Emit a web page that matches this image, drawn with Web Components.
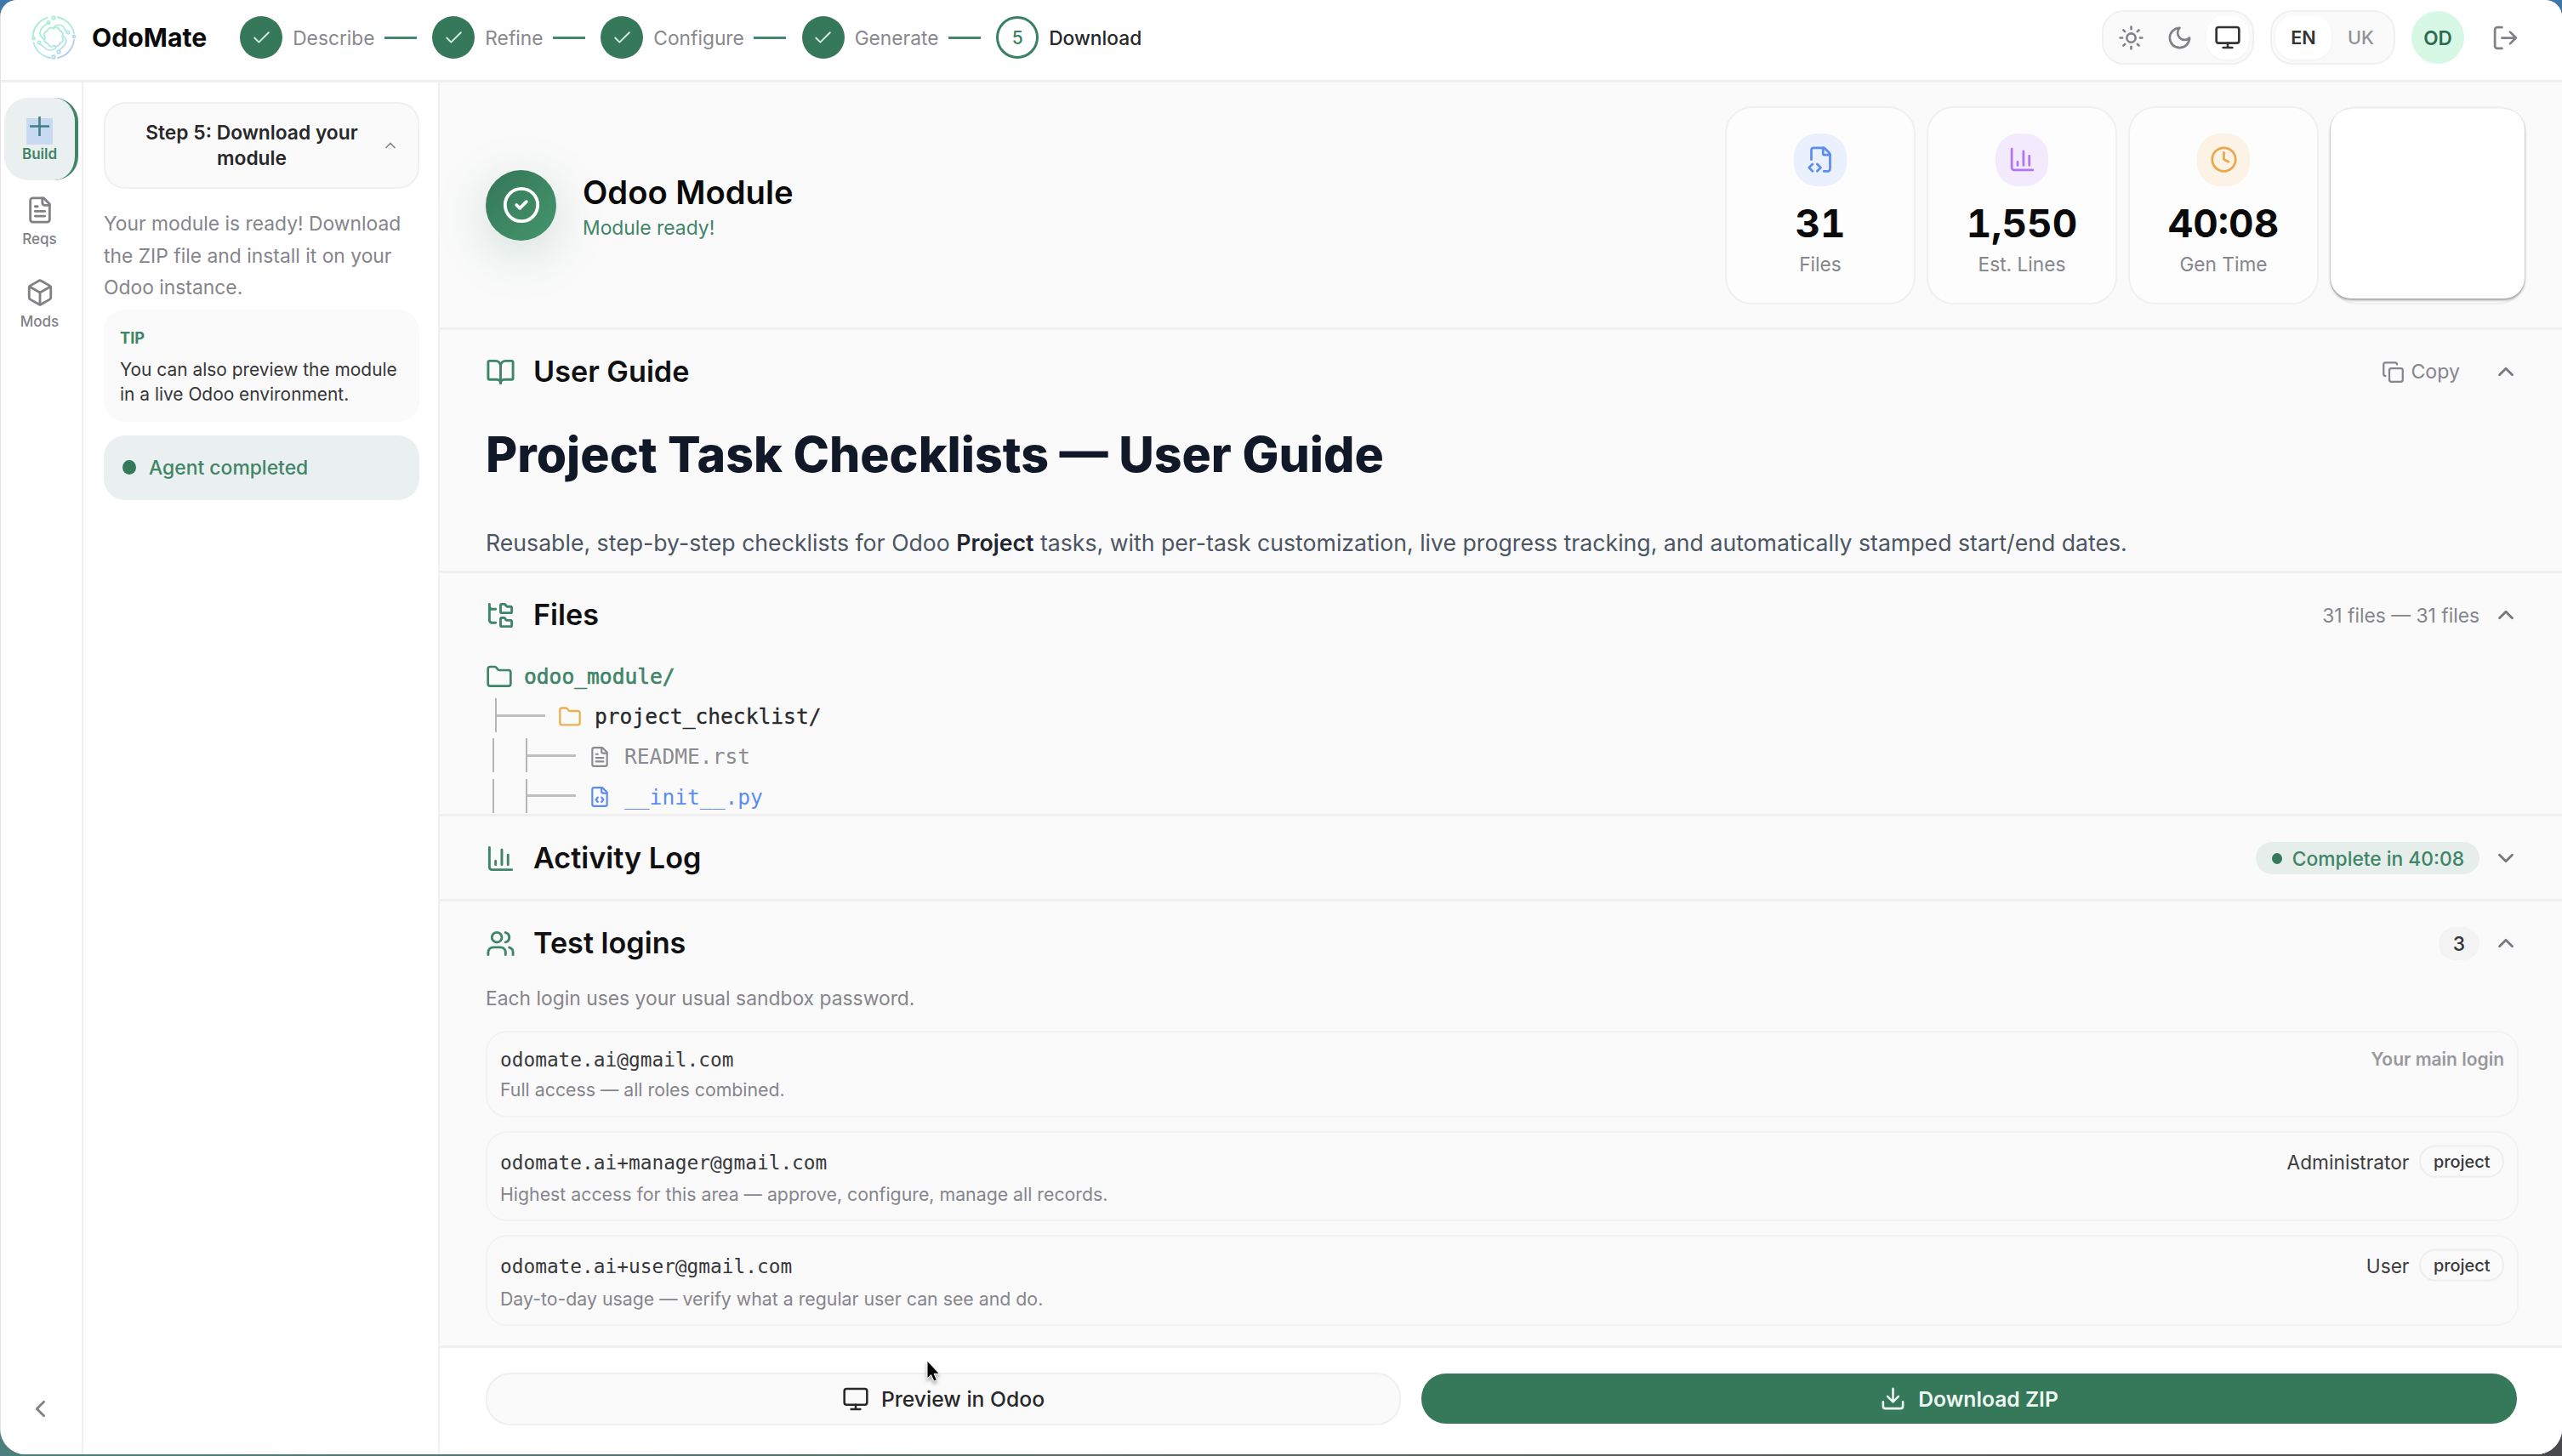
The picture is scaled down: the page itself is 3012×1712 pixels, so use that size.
<!DOCTYPE html>
<html lang="en">
<head>
<meta charset="utf-8">
<title>OdoMate</title>
<style>
html, body { margin: 0; height: 100%; }
body {
  background: linear-gradient(#3f76ac 0 50%, transparent 50%), linear-gradient(90deg, #4d7f7d, #5a6462 50%, #4a4a4c);
  font-family: Inter, "Liberation Sans", sans-serif;
  color: #0a0a0b;
  overflow: hidden;
}
</style>
</head>
<body>
<odo-app></odo-app>
<script>
const ICONS = {
  check: '<path d="M20 6 9 17l-5-5"/>',
  sun: '<circle cx="12" cy="12" r="4"/><path d="M12 2v2M12 20v2M4.93 4.93l1.41 1.41M17.66 17.66l1.41 1.41M2 12h2M20 12h2M6.34 17.66l-1.41 1.41M19.07 4.93l-1.41 1.41"/>',
  moon: '<path d="M12 3a6 6 0 0 0 9 9 9 9 0 1 1-9-9Z"/>',
  monitor: '<rect width="20" height="14" x="2" y="3" rx="2"/><path d="M8 21h8M12 17v4"/>',
  logout: '<path d="M9 21H5a2 2 0 0 1-2-2V5a2 2 0 0 1 2-2h4M16 17l5-5-5-5M21 12H9"/>',
  file: '<path d="M15 2H6a2 2 0 0 0-2 2v16a2 2 0 0 0 2 2h12a2 2 0 0 0 2-2V7Z"/><path d="M14 2v4a2 2 0 0 0 2 2h4M10 9H8M16 13H8M16 17H8"/>',
  filecode: '<path d="M15 2H6a2 2 0 0 0-2 2v16a2 2 0 0 0 2 2h12a2 2 0 0 0 2-2V7Z"/><path d="M14 2v4a2 2 0 0 0 2 2h4M10 12.5 8 15l2 2.5M14 12.5l2 2.5-2 2.5"/>',
  filecorner: '<path d="M4 12.15V4a2 2 0 0 1 2-2h8a2.4 2.4 0 0 1 1.706.706l3.588 3.588A2.4 2.4 0 0 1 20 8v12a2 2 0 0 1-2 2h-3.35"/><path d="M14 2v5a1 1 0 0 0 1 1h5M5 16l-3 3 3 3M9 22l3-3-3-3"/>',
  box: '<path d="M21 8a2 2 0 0 0-1-1.73l-7-4a2 2 0 0 0-2 0l-7 4A2 2 0 0 0 3 8v8a2 2 0 0 0 1 1.73l7 4a2 2 0 0 0 2 0l7-4A2 2 0 0 0 21 16Z"/><path d="m3.3 7 8.7 5 8.7-5M12 22V12"/>',
  book: '<path d="M12 7v14"/><path d="M3 18a1 1 0 0 1-1-1V4a1 1 0 0 1 1-1h5a4 4 0 0 1 4 4 4 4 0 0 1 4-4h5a1 1 0 0 1 1 1v13a1 1 0 0 1-1 1h-6a3 3 0 0 0-3 3 3 3 0 0 0-3-3z"/>',
  tree: '<path d="M20 10a1 1 0 0 0 1-1V6a1 1 0 0 0-1-1h-2.5a1 1 0 0 1-.8-.4l-.9-1.2A1 1 0 0 0 15 3h-2a1 1 0 0 0-1 1v5a1 1 0 0 0 1 1Z"/><path d="M20 21a1 1 0 0 0 1-1v-3a1 1 0 0 0-1-1h-2.9a1 1 0 0 1-.88-.55l-.42-.85a1 1 0 0 0-.92-.6H13a1 1 0 0 0-1 1v5a1 1 0 0 0 1 1Z"/><path d="M3 5a2 2 0 0 0 2 2h3M3 3v13a2 2 0 0 0 2 2h3"/>',
  chart: '<path d="M3 3v16a2 2 0 0 0 2 2h16M18 17V9M13 17V5M8 17v-3"/>',
  users: '<path d="M16 21v-2a4 4 0 0 0-4-4H6a4 4 0 0 0-4 4v2"/><circle cx="9" cy="7" r="4"/><path d="M22 21v-2a4 4 0 0 0-3-3.87M16 3.13a4 4 0 0 1 0 7.75"/>',
  folder: '<path d="M20 20a2 2 0 0 0 2-2V8a2 2 0 0 0-2-2h-7.9a2 2 0 0 1-1.69-.9L9.6 3.9A2 2 0 0 0 7.93 3H4a2 2 0 0 0-2 2v13a2 2 0 0 0 2 2Z"/>',
  clock: '<circle cx="12" cy="12" r="10"/><path d="M12 6v6l4 2"/>',
  copy: '<rect width="14" height="14" x="8" y="8" rx="2"/><path d="M4 16c-1.1 0-2-.9-2-2V4c0-1.1.9-2 2-2h10c1.1 0 2 .9 2 2"/>',
  download: '<path d="M21 15v4a2 2 0 0 1-2 2H5a2 2 0 0 1-2-2v-4M7 10l5 5 5-5M12 15V3"/>',
  done: '<circle cx="12" cy="12" r="10"/><path d="m9 12 2 2 4-4"/>',
  up: '<path d="m18 15-6-6-6 6"/>',
  down: '<path d="m6 9 6 6 6-6"/>',
  left: '<path d="m15 18-6-6 6-6"/>'
};

function define(name, css, html) {
  customElements.define(name, class extends HTMLElement {
    connectedCallback() {
      if (this.shadowRoot) return;
      const body = typeof html === 'function' ? html(this) : html;
      this.attachShadow({ mode: 'open' }).innerHTML =
        `<style>*{box-sizing:border-box}:host{box-sizing:border-box}${css}</style>${body}`;
    }
  });
}

define('odo-icon', ':host{display:block;flex:none}svg{display:block}',
  el => `<svg width="${el.getAttribute('size')}" height="${el.getAttribute('size')}" viewBox="0 0 24 24" fill="none" stroke="currentColor" stroke-width="${el.getAttribute('stroke') || 2}" stroke-linecap="round" stroke-linejoin="round">${ICONS[el.getAttribute('name')]}</svg>`);

define('odo-logo', ':host{display:block;flex:none;width:52px;height:52px}svg{display:block}', `
<svg width="52" height="52" viewBox="0 0 52 52" fill="none" stroke="url(#g)" stroke-linecap="round">
<defs><linearGradient id="g" x1="6" y1="4" x2="46" y2="50" gradientUnits="userSpaceOnUse"><stop offset="0" stop-color="#a6ecd2"/><stop offset=".6" stop-color="#b2ebe0"/><stop offset="1" stop-color="#a9bff6"/></linearGradient></defs>
<path stroke-width="1.9" d="M18.500 2.900A24.300 24.300 0 0 0 1.700 24M2.500 32A24.300 24.300 0 0 0 22 50M31 50A24.300 24.300 0 0 0 50 29M50 21A24.300 24.300 0 0 0 31 2.200"/>
<path stroke-width="1.7" d="M26 15c2-4 7-5 11-2 2 2 2 4 4 6M37 24c4 2 5 7 2 11-2 2-4 4-6 6M29 37c-2 4-7 5-11 3-3-2-4-4-8-6M15 28c-4-2-6-6-4-11 2-4 5-5 8-8"/>
<path stroke-width="1.9" d="M26 15.500c3-2.500 6.500-1 7 2.500 3.500.5 5 4 3 7 2.500 3 1 6.500-2.500 7.500-.5 3.500-4 5-7 3-3 2.500-6.500 1-7.500-2.500-3.500-.5-5-4-3-7-2.500-3-1-6.500 2.500-7.500.5-3.500 4.500-5 7.500-3z"/>
<g stroke-width="1.800"><circle cx="20" cy="8.500" r="1.700"/><circle cx="43" cy="20" r="1.700"/><circle cx="32" cy="43" r="1.800"/><circle cx="26" cy="49" r="1.800"/><circle cx="9" cy="32" r="1.700"/><circle cx="2.500" cy="27" r="1.500"/><circle cx="50" cy="25" r="1.500"/><circle cx="26" cy="3" r="1.800"/></g>
</svg>`);

/* ---------- header ---------- */
define('odo-step', `
:host{display:flex;align-items:center;font-size:22.75px;color:#88888e}
.dot{width:50px;height:50px;border-radius:50%;background:#35785a;color:#d9efe4;display:flex;align-items:center;justify-content:center;margin-right:12px}
:host([current]){color:#28282b;font-weight:500}
:host([current]) .dot{background:#fff;border:3px solid #3a8062;color:#3a8062;font-size:21px;font-weight:500}
.line{width:38px;height:3px;background:#45896d;margin:0 18.3px 0 11.5px}`,
  el => `<span class="dot">${el.hasAttribute('current') ? el.getAttribute('current') : '<odo-icon name="check" size="25" stroke="1.7"></odo-icon>'}</span><slot></slot>${el.hasAttribute('current') ? '' : '<span class="line"></span>'}`);

define('odo-header', `
:host{display:flex;align-items:center;height:97px;padding:0 50px 6px 36px;background:#fff;border-bottom:3px solid #efeff0}
.brand{font-size:30.2px;font-weight:700;margin:0 39px 0 19px}
.steps{display:flex;flex:1}
.group{display:flex;align-items:center;height:64px;padding:4px;border:2px solid #f0f0f1;border-radius:26px;background:#fafafa;color:#808086}
.group span{display:flex;align-items:center;justify-content:center;height:52px;border-radius:22px}
.theme span{width:57px}
.group .on{background:#fff;color:#333336;box-shadow:0 1px 3px rgba(0,0,0,.04)}
.theme .on{width:50px;margin-left:3px}
.lang{margin-left:19px;font-size:21.6px;font-weight:600}
.lang span{width:66px}
.lang .off{width:69px;color:#929298;font-weight:500}
.avatar{width:62px;height:62px;border-radius:50%;background:#d8f8e6;color:#2c6b50;font-weight:600;font-size:22.5px;display:flex;align-items:center;justify-content:center;margin:0 32px 0 19px;flex:none}
.out{color:#808086}`, `
<odo-logo></odo-logo><span class="brand">OdoMate</span>
<nav class="steps"><odo-step>Describe</odo-step><odo-step>Refine</odo-step><odo-step>Configure</odo-step><odo-step>Generate</odo-step><odo-step current="5">Download</odo-step></nav>
<div class="group theme"><span><odo-icon name="sun" size="31"></odo-icon></span><span><odo-icon name="moon" size="31"></odo-icon></span><span class="on"><odo-icon name="monitor" size="32"></odo-icon></span></div>
<div class="group lang"><span class="on">EN</span><span class="off">UK</span></div>
<span class="avatar">OD</span><odo-icon class="out" name="logout" size="33"></odo-icon>`);

/* ---------- left rail ---------- */
define('odo-rail-item', `
:host{display:flex;flex-direction:column;align-items:center;width:83px;height:97px;padding-top:16px;font-size:17px;font-weight:500;color:#808086;line-height:22px;border-radius:28px}
.pic{height:37px;display:flex;align-items:center;justify-content:center;margin-bottom:5px}
:host([active]){width:87px;background:#eaf0ef;border-right:4px solid #3f8567;color:#3f8567;font-weight:600;padding-top:24px}
.plus{width:31px;height:31px;background:#c8daf1;color:#3d7f86;display:grid;justify-items:center}
.plus svg{margin-top:-3px}
:host([active]) .pic{height:31px;margin-bottom:0}`,
  el => `<span class="pic">${el.hasAttribute('active') ? '<span class="plus"><svg width="25" height="25" viewBox="0 0 25 25" stroke="currentColor" stroke-width="2.6"><path d="M12.5 1v23M1 12.5h23"/></svg></span>' : `<odo-icon name="${el.getAttribute('icon')}" size="34" stroke="2"></odo-icon>`}</span><slot></slot>`);

define('odo-rail', `
:host{display:flex;flex-direction:column;align-items:flex-start;width:97px;background:#fff;border-right:2px solid #f0f0f1;padding:18px 0 0 4px}
.items{flex:1}
.collapse{color:#808086;margin:0 0 37px 26px}`, `
<div class="items"><odo-rail-item active>Build</odo-rail-item><odo-rail-item icon="file">Reqs</odo-rail-item><odo-rail-item icon="box">Mods</odo-rail-item></div>
<odo-icon class="collapse" name="left" size="33"></odo-icon>`);

/* ---------- side panel ---------- */
define('odo-guide', `
:host{display:flex;flex-direction:column;width:419px;padding:23px 22px 0 24px;background:#fff;border-right:2px solid #f0f0f1}
.step{display:flex;align-items:center;height:102px;border:2px solid #f0f0f1;border-radius:25px;background:#fafafa;padding-left:22px;font-size:22.8px;font-weight:600;line-height:30.5px;text-align:center;color:#28282b}
.step b{flex:1;font-weight:600;padding:0 3px 0 0}
.step odo-icon{color:#808086;margin-right:22px}
p{margin:23px 0 6px;font-size:22.85px;line-height:37.5px;color:#85858c;white-space:nowrap}
.tip{height:132px;border-radius:25px;background:#fafafa;padding:20px 19px;color:#363639;font-size:20.9px;line-height:29px;white-space:nowrap}
.tip b{display:block;font-size:18.2px;line-height:26px;color:#3f8567;margin-bottom:10px}
.agent{display:flex;align-items:center;gap:15px;height:76px;margin-top:16px;border-radius:25px;background:#eaf0ef;padding-left:22px;font-size:22.9px;font-weight:500;color:#3f8567}
.agent i{width:16px;height:17px;border-radius:50%;background:#35785a}`, `
<div class="step"><b>Step 5: Download your<br>module</b><odo-icon name="up" size="20"></odo-icon></div>
<p>Your module is ready! Download<br>the ZIP file and install it on your<br>Odoo instance.</p>
<div class="tip"><b>TIP</b>You can also preview the module<br>in a live Odoo environment.</div>
<div class="agent"><i></i>Agent completed</div>`);

/* ---------- hero ---------- */
define('odo-stat', `
:host{display:flex;flex-direction:column;align-items:center;width:224px;height:233px;border:2px solid #f0f0f1;border-radius:32px;background:#fdfdfd;padding-top:30px}
.tile{width:62px;height:62px;border-radius:27px;display:flex;align-items:center;justify-content:center;background:var(--tint);color:var(--ink)}
.num{font-size:45.7px;font-weight:700;line-height:56px;margin-top:16px;font-variant-numeric:tabular-nums}
.lab{font-size:22.7px;line-height:30px;margin-top:5px;color:#85858c}`,
  el => `<span class="tile"><odo-icon name="${el.getAttribute('icon')}" size="33"></odo-icon></span><span class="num">${el.getAttribute('value')}</span><span class="lab"><slot></slot></span>`);

define('odo-hero', `
:host{display:flex;align-items:center;height:291px;padding:0 43px 0 54px;border-bottom:3px solid #efeff0}
.badge{width:83px;height:83px;border-radius:50%;flex:none;background:linear-gradient(135deg,#357659,#44966c);color:#fff;display:flex;align-items:center;justify-content:center;box-shadow:0 14px 60px rgba(53,120,90,.22)}
.text{flex:1;margin-left:31px;padding-top:3px}
h1{margin:0;font-size:38.2px;font-weight:600;line-height:48px}
.sub{font-size:22.85px;line-height:30px;color:#3f8567;margin-top:3px}
.stats{display:flex;gap:13px}
.blank{width:230px;height:233px;border:2px solid #f0f0f1;border-radius:32px;padding-top:1px}
.blank i{display:block;width:228px;height:223px;margin-left:-1px;background:#fff;border-radius:24px;box-shadow:0 2px 3px rgba(0,0,0,.36),0 0 2px rgba(0,0,0,.14);clip-path:inset(0 -4px -8px -4px)}`, `
<div class="badge"><odo-icon name="done" size="46" stroke="2"></odo-icon></div>
<div class="text"><h1>Odoo Module</h1><div class="sub">Module ready!</div></div>
<div class="stats">
<odo-stat icon="filecorner" value="31" style="--tint:#eaf0fd;--ink:#5b8df0">Files</odo-stat>
<odo-stat icon="chart" value="1,550" style="--tint:#f3eafd;--ink:#b274f5">Est. Lines</odo-stat>
<odo-stat icon="clock" value="40:08" style="--tint:#fcf2e6;--ink:#e9a94b">Gen Time</odo-stat>
<div class="blank"><i></i></div></div>`);

/* ---------- sections ---------- */
define('odo-section', `
:host{display:block;height:var(--h);border-bottom:3px solid #efeff0;overflow:hidden}
header{display:flex;align-items:center;height:98px;padding:0 51px 0 54px}
header>odo-icon:first-child{color:#3f8567}
h2{margin:-2px 0 0 21px;flex:1;font-size:34.2px;font-weight:600;color:#111113}
.end{display:flex;align-items:center;font-size:22.8px;color:#85858c}
.chev{color:#77777d;margin-left:16px}
.body{padding:0 51px 0 54px}`,
  el => `<header><odo-icon name="${el.getAttribute('icon')}" size="35" stroke="2"></odo-icon><h2>${el.getAttribute('heading')}</h2><div class="end"><slot name="end"></slot></div><odo-icon class="chev" name="${el.getAttribute('chevron')}" size="30" stroke="2.2"></odo-icon></header><div class="body"><slot></slot></div>`);

define('odo-copy', ':host{display:flex;align-items:center;gap:7px;font-size:23.2px;margin-right:23px;color:#85858c}', '<odo-icon name="copy" size="27"></odo-icon>Copy');
define('odo-done', ':host{display:flex;align-items:center;gap:12px;height:38px;padding:0 18px 0 19px;border-radius:19px;background:#e6eeeb;font-size:22.8px;font-weight:500;color:#3f8567}i{width:12px;height:13px;border-radius:50%;background:#35785a}', '<i></i><slot></slot>');
define('odo-count', ':host{display:flex;align-items:center;justify-content:center;width:48px;height:39px;border-radius:20px;background:#f3f3f4;color:#333336;font-size:22.8px;font-weight:500}', '<slot></slot>');

define('odo-doc', `
h1{margin:0;font-size:57.2px;font-weight:800;line-height:98px;color:#111827;white-space:nowrap}
p{margin:29px 0 0;font-size:26.67px;line-height:50px;color:#4b5563;white-space:nowrap}
b{font-weight:600;color:#1f2430}:host{display:block}`, `
<h1>Project Task Checklists — User Guide</h1>
<p>Reusable, step-by-step checklists for Odoo <b>Project</b> tasks, with per-task customization, live progress tracking, and automatically stamped start/end dates.</p>`);

define('odo-node', `
:host{display:flex;align-items:center;height:47.2px;font-family:"DejaVu Sans Mono","Liberation Mono",monospace;font-size:24.6px;color:var(--c);white-space:pre}
.bar,.tee{height:40px;border-left:2px solid #b5b5b7;margin-top:-3px}
.bar{width:39px;margin-left:8px}
.tee{width:59px;display:flex;align-items:center}
.tee::after{content:"";flex:1;height:3px;background:#bfbfc1}
.d1{margin-left:11px}
odo-icon{color:var(--i,var(--c))}`,
  el => {
    const d = +el.getAttribute('depth');
    const lines = d === 0 ? '' : d === 1 ? '<span class="tee d1"></span>' : '<span class="bar"></span><span class="tee"></span>';
    return `${lines}<odo-icon name="${el.getAttribute('icon')}" size="${['32', '28', '26'][d]}" style="margin:0 ${[13, 15, 16][d]}px 0 ${[0, 15, 15][d]}px"></odo-icon><slot></slot>`;
  });

define('odo-login', `
:host{display:flex;justify-content:space-between;height:var(--h);border:2px solid #f3f3f4;border-radius:25px;padding:var(--p) 15px 0 15px;margin-bottom:16px}
.mail{font-family:"DejaVu Sans Mono","Liberation Mono",monospace;font-size:22.8px;line-height:32px;color:#38383b}
.desc{font-size:21.3px;line-height:var(--l);color:#85858c}
.end{display:flex;gap:12px;align-items:baseline;height:32px;line-height:32px;font-size:22.7px;color:#3c3c3f}
.tag{font-size:19.9px;font-weight:500;line-height:34px;padding:0 14.5px;border:2px solid #eeeeef;border-radius:19px;margin-top:-5px;transform:translateY(-2.500px);color:#38383b}
.main{font-size:21px;font-weight:600;color:#98989d}`,
  el => `<div><div class="mail">${el.getAttribute('mail')}</div><div class="desc"><slot></slot></div></div><div class="end">${el.hasAttribute('role-name') ? `${el.getAttribute('role-name')}<span class="tag">project</span>` : '<span class="main">Your main login</span>'}</div>`);

define('odo-logins', ':host{display:block}p{margin:-1px 0 21px;font-size:22.85px;line-height:34px;color:#85858c}', `
<p>Each login uses your usual sandbox password.</p>
<odo-login mail="odomate.ai@gmail.com" style="--h:102px;--p:16px;--l:39px">Full access — all roles combined.</odo-login>
<odo-login mail="odomate.ai+manager@gmail.com" role-name="Administrator" style="--h:106px;--p:19px;--l:42px">Highest access for this area — approve, configure, manage all records.</odo-login>
<odo-login mail="odomate.ai+user@gmail.com" role-name="User" style="--h:107px;--p:19px;--l:45px">Day-to-day usage — verify what a regular user can see and do.</odo-login>`);

define('odo-actions', `
:host{display:flex;gap:24px;padding:29px 53px 0 54px;background:#fff;flex:1;align-items:flex-start}
div{display:flex;align-items:center;justify-content:center;height:62px;border-radius:29px;font-size:24.7px;font-weight:500;color:#28282b}
.preview{width:1076px;border:2px solid #f0f0f2;background:#fafafa;gap:14px}
.zip{flex:1;height:59px;background:#35785a;color:#eef7f2;font-weight:600;gap:14px;margin-top:1px}`, `
<div class="preview"><odo-icon name="monitor" size="32" stroke="1.9"></odo-icon>Preview in Odoo</div>
<div class="zip"><odo-icon name="download" size="31"></odo-icon>Download ZIP</div>`);

define('odo-app', `
:host{display:flex;flex-direction:column;width:3012px;height:1710px;background:#fff;border-radius:20px 20px 30px 30px;overflow:hidden;position:relative;border-left:1px solid #e4e4e6}
.cols{display:flex;flex:1;min-height:0}
main{flex:1;min-width:0;display:flex;flex-direction:column;background:#fafafa}
odo-section,odo-hero{flex:none}
.cursor{position:absolute;left:1087px;top:1598px;filter:drop-shadow(0 3px 2px rgba(0,0,0,.35))}`, `
<odo-header></odo-header>
<div class="cols"><odo-rail></odo-rail><odo-guide></odo-guide>
<main><odo-hero></odo-hero>
<odo-section icon="book" heading="User Guide" chevron="up" style="--h:286px"><odo-copy slot="end"></odo-copy><odo-doc></odo-doc></odo-section>
<odo-section icon="tree" heading="Files" chevron="up" style="--h:286px"><span slot="end">31 files — 31 files</span>
<odo-node depth="0" icon="folder" style="--c:#3f8567;-webkit-text-stroke:.6px">odoo_module/</odo-node>
<odo-node depth="1" icon="folder" style="--c:#28282b;--i:#ecb04f;-webkit-text-stroke:.3px">project_checklist/</odo-node>
<odo-node depth="2" icon="file" style="--c:#8a8a90">README.rst</odo-node>
<odo-node depth="2" icon="filecode" style="--c:#5b8df0">__init__.py</odo-node></odo-section>
<odo-section icon="chart" heading="Activity Log" chevron="down" style="--h:100px"><odo-done slot="end">Complete in 40:08</odo-done></odo-section>
<odo-section icon="users" heading="Test logins" chevron="up" style="--h:525px"><odo-count slot="end">3</odo-count><odo-logins></odo-logins></odo-section>
<odo-actions></odo-actions></main></div>
<svg class="cursor" width="18" height="28" viewBox="0 0 18 28"><path d="M2 2v21l4.6-4.4 3.4 7.6 3.4-1.6-3.3-7.3H16.5z" fill="#050505" stroke="#fff" stroke-width="1"/></svg>`);
</script>
</body>
</html>
